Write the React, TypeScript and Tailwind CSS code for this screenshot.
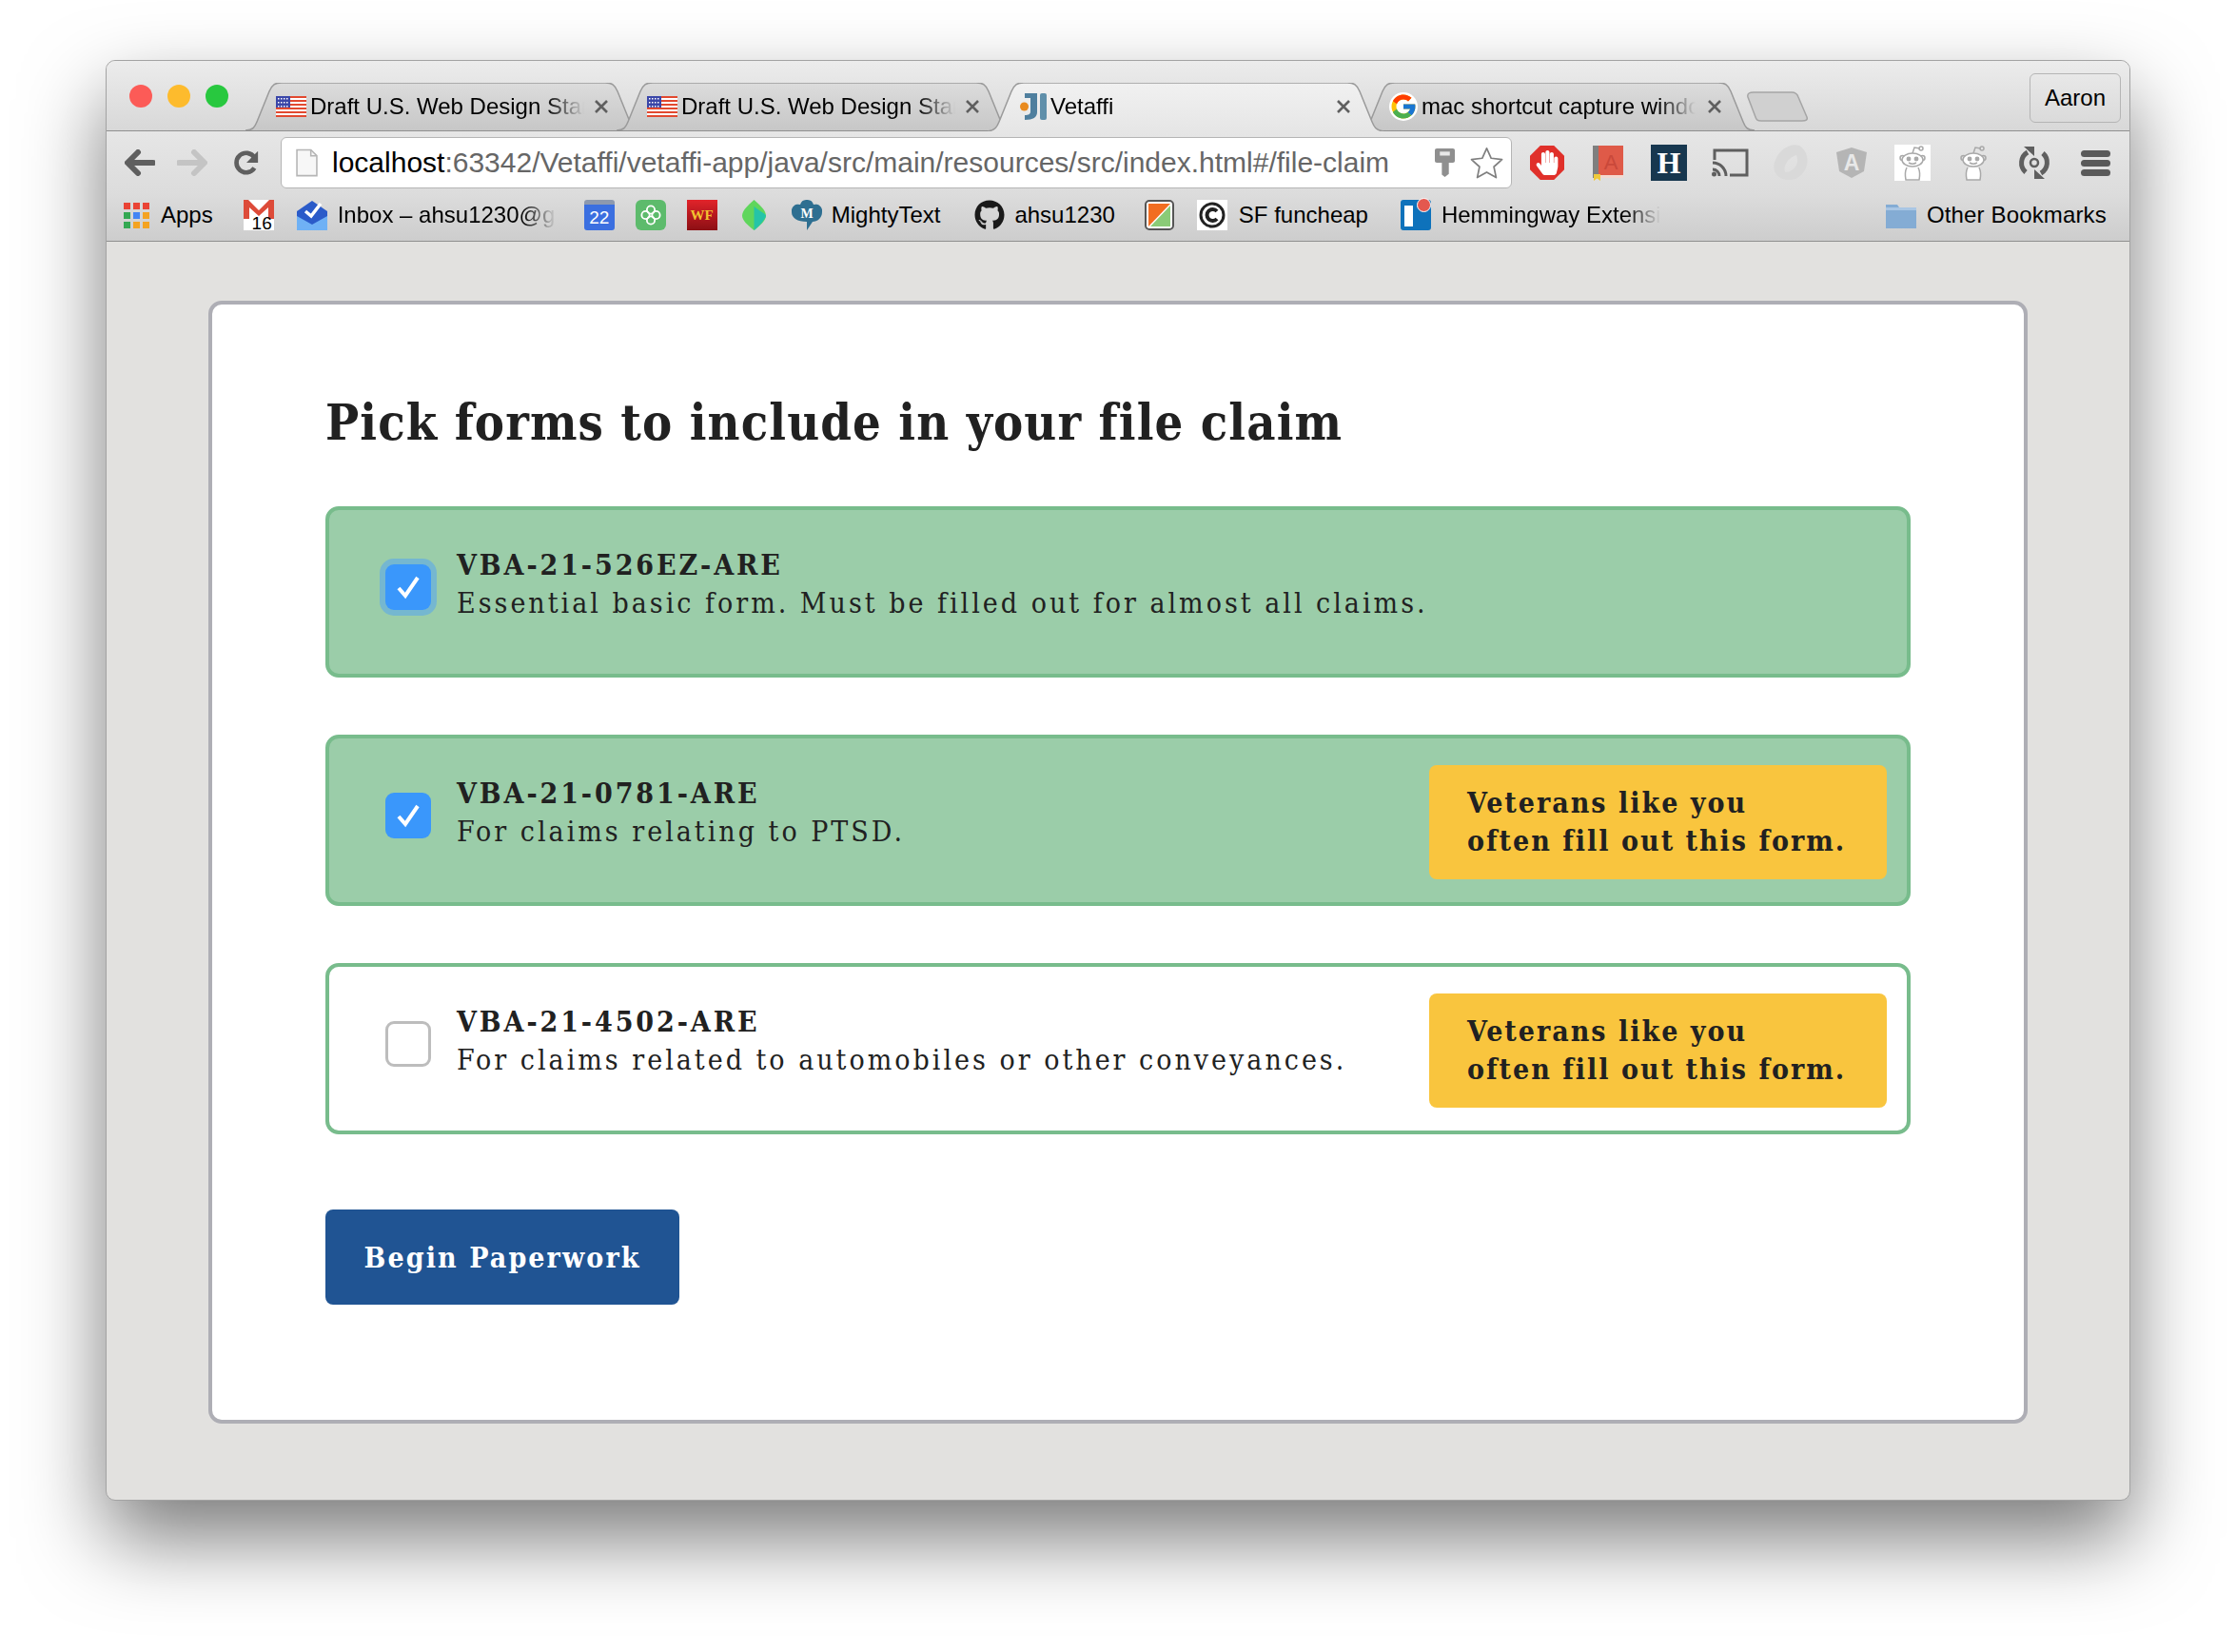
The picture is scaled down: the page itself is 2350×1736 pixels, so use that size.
import { FaGithub, FaHandPaper } from 'react-icons/fa';
import { FcGoogle } from 'react-icons/fc';

const serif = "font-['DejaVu_Serif_Condensed','DejaVu_Serif',serif]";
const chromeFont = "font-['Liberation_Sans',Arial,sans-serif]";

function Flag() {
    return (
        <svg width="32" height="22" viewBox="0 0 32 22" className="shrink-0">
            <rect width="32" height="22" fill="#fff" />
            {[0, 4, 8, 12, 16, 20].map(y => (
                <rect key={y} y={y} width="32" height="2" fill="#e2492f" />
            ))}
            <rect width="15" height="12" fill="#3a46a8" />
            {[2, 6, 10].map(y =>
                [2, 5, 8, 11].map(x => <rect key={`${x}-${y}`} x={x} y={y} width="1.5" height="1.5" fill="#fff" />)
            )}
        </svg>
    );
}

function IdeaIcon() {
    return (
        <svg width="28" height="28" viewBox="0 0 28 28" className="ml-[2px] shrink-0">
            <path d="M5 0h13v20c0 5-4 8-13 8v-5c4 0 6-1 6-4V5H5z" fill="#4f7f9e" />
            <rect x="21" y="0" width="7" height="28" rx="2" fill="#5f8faa" />
            <circle cx="4.5" cy="14" r="4.5" fill="#e98a1e" />
        </svg>
    );
}

function Tab({ title, active, icon, left }: { title: string; active?: boolean; icon: React.ReactNode; left?: boolean }) {
    return (
        <div className={`relative w-[416px] shrink-0 ${active ? 'z-10 h-[51px] -mb-px' : 'h-[50px]'} ${left ? '' : '-ml-[26px]'}`}>
            <svg width="416" height={active ? 51 : 50} viewBox={`0 0 416 ${active ? 51 : 50}`} className="absolute inset-0">
                <defs>
                    <linearGradient id={active ? 'tabOn' : 'tabOff'} x1="0" y1="0" x2="0" y2="1">
                        <stop offset="0" stopColor={active ? '#f1f1f1' : '#dcdcdc'} />
                        <stop offset="1" stopColor={active ? '#e6e6e6' : '#c7c7c7'} />
                    </linearGradient>
                </defs>
                <path
                    d={`M0 ${active ? 51 : 50}C8 50 10 46 12 41L25 9C28 2 31 0 38 0H378C385 0 388 2 391 9L404 41C406 46 408 50 416 ${active ? 51 : 50}`}
                    fill={`url(#${active ? 'tabOn' : 'tabOff'})`}
                    stroke="#9a9a9a"
                    strokeWidth="1.5"
                />
            </svg>
            <div className="relative flex h-[50px] items-center pl-[32px] text-[24px] text-black">
                {icon}
                <span className="ml-[4px] w-[288px] overflow-hidden whitespace-nowrap [mask-image:linear-gradient(to_right,#000_86%,transparent_100%)]">
                    {title}
                </span>
            </div>
            <svg width="16" height="16" viewBox="0 0 16 16" className="absolute right-[34px] top-[17px]">
                <path d="M2 2l12 12M14 2L2 14" stroke="#5f5f5f" strokeWidth="2.6" />
            </svg>
        </div>
    );
}

function ArrowIcon({ back, color }: { back?: boolean; color: string }) {
    return (
        <svg width="32" height="28" viewBox="0 0 32 28" className={back ? '' : '-scale-x-100'}>
            <path d="M14 3L3 14l11 11M4 14h26" fill="none" stroke={color} strokeWidth="6" strokeLinecap="round" strokeLinejoin="round" />
        </svg>
    );
}

function ReloadIcon() {
    return (
        <svg width="28" height="28" viewBox="0 0 30 30">
            <path d="M24 21a11 11 0 1 1 0-12" fill="none" stroke="#5f5f5f" strokeWidth="5" />
            <path d="M28 2v13H15z" fill="#5f5f5f" />
        </svg>
    );
}

function RedditIcon({ box }: { box?: boolean }) {
    return (
        <div className={`flex h-[38px] w-[38px] items-center justify-center ${box ? 'bg-white' : ''}`}>
            <svg width="28" height="38" viewBox="0 0 28 38" fill="none" stroke="#a9a9a9" strokeWidth="1.5">
                <path d="M14 9l2-6 6 1" />
                <circle cx="23" cy="4" r="2" />
                <circle cx="3.500" cy="14" r="2.500" />
                <circle cx="24.500" cy="14" r="2.500" />
                <ellipse cx="14" cy="16" rx="11" ry="7" fill="#fff" />
                <circle cx="10" cy="15" r="1.700" fill="#a9a9a9" />
                <circle cx="18" cy="15" r="1.700" fill="#a9a9a9" />
                <path d="M10 19c2.500 1.500 5.500 1.500 8 0" />
                <path d="M8 24c-2 4-2 8-1 13h14c1-5 1-9-1-13" fill="#fff" />
            </svg>
        </div>
    );
}

function ExtensionIcons() {
    return (
        <div className="ml-[5px] flex items-center">
            <div className="flex w-[64px] justify-center">
                <div className="flex h-[36px] w-[36px] items-center justify-center bg-[#e0302a] [clip-path:polygon(30%_0,70%_0,100%_30%,100%_70%,70%_100%,30%_100%,0_70%,0_30%)]">
                    <FaHandPaper className="text-[26px] text-white" />
                </div>
            </div>
            <div className="flex w-[64px] justify-center">
                <svg width="32" height="37" viewBox="0 0 32 37">
                    <rect width="32" height="34" fill="#df5a48" />
                    <rect width="6" height="34" fill="#7f7f7f" />
                    <rect x="6" y="31" width="26" height="3" fill="#f3d9d0" />
                    <path d="M1 30h7v7l-3.500-2.500L1 37z" fill="#f0c93a" />
                    <text x="19" y="25" fontSize="22" fill="#c9483a" textAnchor="middle" fontFamily="Liberation Sans">A</text>
                </svg>
            </div>
            <div className="flex w-[64px] justify-center">
                <div className="flex h-[38px] w-[38px] items-center justify-center bg-[#17374f] font-['Liberation_Serif',serif] text-[32px] font-bold leading-none text-white">
                    H
                </div>
            </div>
            <div className="flex w-[64px] justify-center">
                <svg width="39" height="30" viewBox="0 0 39 30" fill="none" stroke="#5f5f5f">
                    <path d="M3 12V2h34v26H19" strokeWidth="3" />
                    <path d="M1 15a14 14 0 0 1 14 14M1 22a7 7 0 0 1 7 7" strokeWidth="3" />
                    <circle cx="2.500" cy="27" r="2.500" fill="#5f5f5f" stroke="none" />
                </svg>
            </div>
            <div className="flex w-[64px] justify-center">
                <svg width="38" height="38" viewBox="0 0 38 38">
                    <path d="M28 1C40 8 40 28 24 36 8 40-3 30 3 16 7 6 18-2 28 1zM25 11C16 14 11 22 13 29c9 0 16-9 12-18z" fill="#d9d9d9" fillRule="evenodd" />
                </svg>
            </div>
            <div className="flex w-[64px] justify-center">
                <svg width="32" height="32" viewBox="0 0 32 32">
                    <path d="M16 0l16 5-3 20-13 7-13-7L0 5z" fill="#b5b5b5" />
                    <text x="16" y="24" fontSize="23" fill="#e8e8e8" textAnchor="middle" fontFamily="Liberation Sans" fontWeight="700">A</text>
                </svg>
            </div>
            <div className="flex w-[64px] justify-center">
                <RedditIcon box />
            </div>
            <div className="flex w-[64px] justify-center">
                <RedditIcon />
            </div>
            <div className="flex w-[64px] justify-center">
                <svg width="34" height="34" viewBox="0 0 34 34" fill="none">
                    <path d="M8 27a13 13 0 0 1 2-21M26 7a13 13 0 0 1-2 21" stroke="#5f5f5f" strokeWidth="5" />
                    <path d="M6 0h11v10zM28 34H17V24z" fill="#5f5f5f" />
                    <circle cx="17" cy="17" r="4" stroke="#5f5f5f" strokeWidth="2.500" />
                </svg>
            </div>
            <div className="flex w-[64px] flex-col items-center gap-[3px]">
                <div className="h-[7px] w-[31px] rounded-full bg-[#5a5a5a]" />
                <div className="h-[7px] w-[31px] rounded-full bg-[#5a5a5a]" />
                <div className="h-[7px] w-[31px] rounded-full bg-[#5a5a5a]" />
            </div>
        </div>
    );
}

function BookmarksBar() {
    const appColors = ['#ea4335', '#ea4335', '#ea4335', '#34a853', '#4285f4', '#f4a321', '#34a853', '#f4a321', '#f4a321'];
    return (
        <div className="flex h-[50px] items-center border-b border-[#8f8f8f] bg-gradient-to-b from-[#dcdcdc] to-[#cdcdcd] pb-[5px] text-[24px] text-black">
            <div className="ml-[18px] grid w-[27px] grid-cols-3 gap-[3px]">
                {appColors.map((c, i) => (
                    <div key={i} className="h-[7px] w-[7px]" style={{ background: c }} />
                ))}
            </div>
            <span className="ml-[12px]">Apps</span>

            <div className="relative ml-[32px] h-[32px] w-[32px] bg-white">
                <svg width="32" height="20" viewBox="0 0 32 20" className="absolute left-0 top-0">
                    <path d="M0 0h5l11 11L27 0h5v20h-6V8L16 17 6 8v12H0z" fill="#dd4b39" />
                </svg>
                <span className="absolute -bottom-[2px] right-[2px] text-[19px] leading-[19px]">16</span>
            </div>
            <svg width="32" height="32" viewBox="0 0 32 32" className="ml-[24px]">
                <path d="M0 12L16 1l16 11v20H0z" fill="#2b5bc9" />
                <path d="M9 12l6 5L25 4" fill="none" stroke="#fff" strokeWidth="3.500" />
                <path d="M0 17l16 9 16-9v15H0z" fill="#6fb1f5" />
            </svg>
            <span className="ml-[11px] w-[230px] overflow-hidden whitespace-nowrap [mask-image:linear-gradient(to_right,#000_84%,transparent_100%)]">
                Inbox – ahsu1230@gm
            </span>

            <div className="ml-[29px] flex h-[32px] w-[32px] items-center justify-center rounded-[3px] border-t-[5px] border-[#8d99ae] bg-[#3b6fe0] text-[19px] leading-none text-white">
                22
            </div>
            <div className="ml-[22px] flex h-[32px] w-[32px] items-center justify-center rounded-[6px] bg-[#5dbb6c]">
                <svg width="22" height="22" viewBox="0 0 24 24" fill="none" stroke="#fff" strokeWidth="2">
                    <circle cx="12" cy="6" r="4.500" />
                    <circle cx="6" cy="12" r="4.500" />
                    <circle cx="18" cy="12" r="4.500" />
                    <circle cx="12" cy="18" r="4.500" />
                </svg>
            </div>
            <div className="ml-[22px] flex h-[32px] w-[32px] items-center justify-center bg-gradient-to-b from-[#e2232a] to-[#8c0f14] font-['Liberation_Serif',serif] text-[15px] font-bold text-[#f2c230]">
                WF
            </div>
            <svg width="25" height="32" viewBox="0 0 26 48" preserveAspectRatio="none" className="ml-[26px]">
                <path d="M13 0c8 10 13 18 13 25S20 40 13 48C6 40 0 32 0 25S5 10 13 0z" fill="#5fd65c" />
                <path d="M13 10c6 8 13 12 13 15S20 40 13 48z" fill="#25c4a8" />
            </svg>
            <svg width="32" height="32" viewBox="0 0 32 32" className="ml-[27px]">
                <path d="M16 0a7 7 0 0 1 7 5 7 7 0 0 1 9 8c0 6-5 10-10 10l-6 9v-9C6 23 0 19 0 13a7 7 0 0 1 9-8 7 7 0 0 1 7-5z" fill="#2e6f91" />
                <text x="16" y="19" fontSize="14" fontWeight="700" fill="#fff" textAnchor="middle" fontFamily="Liberation Serif">M</text>
            </svg>
            <span className="ml-[10px]">MightyText</span>

            <FaGithub className="ml-[36px] text-[32px] text-[#1a1a1a]" />
            <span className="ml-[10px]">ahsu1230</span>

            <div className="ml-[31px] flex h-[32px] w-[31px] overflow-hidden rounded-[5px] border-2 border-[#555] bg-white p-[2px]">
                <svg width="23" height="24" viewBox="0 0 23 24">
                    <path d="M0 0h23L0 24z" fill="#f26d21" />
                    <path d="M23 2v22H2z" fill="#8acb77" />
                </svg>
            </div>
            <div className="ml-[24px] flex h-[32px] w-[32px] items-center justify-center bg-white">
                <svg width="30" height="30" viewBox="0 0 30 30" fill="none">
                    <circle cx="15" cy="15" r="12" stroke="#222" strokeWidth="3" />
                    <path d="M20 11a6 6 0 1 0 0 8" stroke="#222" strokeWidth="4" />
                </svg>
            </div>
            <span className="ml-[12px]">SF funcheap</span>

            <div className="relative ml-[34px] h-[32px] w-[32px] rounded-[3px] bg-[#0e72bb]">
                <div className="absolute left-[4px] top-[6px] h-[22px] w-[9px] bg-white" />
                <div className="absolute -top-[2px] right-0 h-[15px] w-[15px] rounded-full border border-white bg-[#e4584f]" />
            </div>
            <span className="ml-[11px] w-[230px] overflow-hidden whitespace-nowrap [mask-image:linear-gradient(to_right,#000_84%,transparent_100%)]">
                Hemmingway Extensi
            </span>

            <svg width="32" height="27" viewBox="0 0 32 27" className="ml-[237px]">
                <path d="M0 2h12l2 3h18v22H0z" fill="#84acd4" />
                <path d="M0 5h32v3H0z" fill="#a9c6e4" />
            </svg>
            <span className="ml-[11px] tracking-[0.15px]">Other Bookmarks</span>
        </div>
    );
}

function FormRow({ code, text, checked, focused, hint }: { code: string; text: string; checked?: boolean; focused?: boolean; hint?: boolean }) {
    return (
        <div className={`flex h-[180px] rounded-[14px] border-[4px] border-[#78bc8c] pl-[59px] ${checked ? 'bg-[#9bcda9]' : 'bg-white'}`}>
            <div
                className={`mt-[57px] flex h-[48px] w-[48px] shrink-0 items-center justify-center rounded-[9px] ${
                    checked ? 'bg-[#3a97fb]' : 'border-[3px] border-[#bdbdbd] bg-white'
                } ${focused ? 'ring-[6px] ring-[#75b7d0]' : ''}`}
            >
                {checked && (
                    <svg width="30" height="28" viewBox="0 0 30 28">
                        <path d="M5 15l7 8L25 4" fill="none" stroke="#fff" strokeWidth="4" />
                    </svg>
                )}
            </div>
            <div className="ml-[27px] mt-[38px] whitespace-nowrap text-[#212121]">
                <div className="text-[30px] font-bold leading-[40px] tracking-[2.9px]">{code}</div>
                <div className="text-[30px] leading-[40px] tracking-[3px]">{text}</div>
            </div>
            {hint && (
                <div className="ml-auto mr-[21px] mt-[28px] h-[120px] w-[481px] rounded-[8px] bg-[#f9c53e] pl-[40px] pt-[20px] text-[30px] font-bold leading-[40px] tracking-[2px] text-[#212121]">
                    Veterans like you
                    <br />
                    often fill out this form.
                </div>
            )}
        </div>
    );
}

export default function App() {
    return (
        <div className="h-[1736px] w-[2350px] overflow-hidden bg-white pl-[111px] pt-[63px]">
            <div className={`w-[2128px] overflow-hidden rounded-[10px] border border-[#a3a3a3] bg-[#e2e1df] shadow-[0_40px_85px_rgba(0,0,0,0.52)] ${chromeFont}`}>
                {/* Tab strip */}
                <div className="flex h-[74px] items-end border-b border-[#8f8f8f] bg-gradient-to-b from-[#ececec] to-[#d8d8d8]">
                    <div className="mb-[24px] ml-[24px] mr-[18px] flex gap-[16px]">
                        <div className="h-[24px] w-[24px] rounded-full bg-[#fc5b57]" />
                        <div className="h-[24px] w-[24px] rounded-full bg-[#fdbb2d]" />
                        <div className="h-[24px] w-[24px] rounded-full bg-[#28c83f]" />
                    </div>
                    <Tab left title="Draft U.S. Web Design Stan" icon={<Flag />} />
                    <Tab title="Draft U.S. Web Design Stan" icon={<Flag />} />
                    <Tab active title="Vetaffi" icon={<IdeaIcon />} />
                    <Tab title="mac shortcut capture windo" icon={<FcGoogle className="shrink-0 rounded-full bg-white text-[30px]" />} />
                    <svg width="64" height="32" viewBox="0 0 64 32" className="-ml-[8px] mb-[9px]">
                        <path d="M1 6C0 2 3 1 7 1h40c4 0 6 2 7 5l9 21c1 3-1 4-5 4H15c-4 0-5-1-6-4z" fill="#d0d0d0" stroke="#a5a5a5" strokeWidth="1.5" />
                    </svg>
                    <div className="mb-[8px] ml-auto mr-[9px] flex h-[52px] w-[96px] items-center justify-center rounded-[6px] border border-[#b5b5b5] text-[24px] text-black">
                        Aaron
                    </div>
                </div>

                {/* Toolbar */}
                <div className="relative z-0 flex h-[66px] items-center bg-gradient-to-b from-[#e6e6e6] to-[#dcdcdc] pl-[19px]">
                    <ArrowIcon back color="#5f5f5f" />
                    <div className="ml-[23px] flex">
                        <ArrowIcon color="#c4c4c4" />
                    </div>
                    <div className="ml-[27px] flex">
                        <ReloadIcon />
                    </div>
                    <div className="ml-[22px] flex h-[54px] w-[1294px] items-center rounded-[6px] border border-[#b5b5b5] bg-white pl-[15px]">
                        <svg width="23" height="30" viewBox="0 0 22 28">
                            <path d="M1 1h14l6 6v20H1z" fill="#f7f7f7" stroke="#b5b5b5" strokeWidth="1.500" />
                            <path d="M15 1v6h6" fill="none" stroke="#b5b5b5" strokeWidth="1.500" />
                        </svg>
                        <span className="ml-[15px] text-[30px] leading-none text-[#666]">
                            <span className="text-black">localhost</span>:63342/Vetaffi/vetaffi-app/java/src/main/resources/src/index.html#/file-claim
                        </span>
                        <svg width="21" height="30" viewBox="0 0 20 36" preserveAspectRatio="none" className="ml-auto">
                            <path d="M0 2q0-2 2-2h16q2 0 2 2v14q0 2-2 2h-4v14l-4 4-3-3V18H2q-2 0-2-2z" fill="#8f8f8f" />
                            <rect x="5" y="4" width="10" height="5" fill="#e8e8e8" />
                        </svg>
                        <svg width="35" height="34" viewBox="0 0 36 36" className="ml-[16px] mr-[8px]">
                            <path d="M18 2l5 11 12 1.500-9 8 2.500 12L18 28.500 7.500 34.500 10 22.500l-9-8L13 13z" fill="#fff" stroke="#7f7f7f" strokeWidth="1.800" strokeLinejoin="round" />
                        </svg>
                    </div>
                    <ExtensionIcons />
                </div>

                <BookmarksBar />

                {/* Page */}
                <div className={`mx-[107px] mb-[80px] mt-[62px] rounded-[14px] border-[4px] border-[#aeaeb5] bg-white px-[119px] pb-[121px] pt-[91px] ${serif}`}>
                    <h1 className="h-[121px] whitespace-nowrap text-[52px] font-bold leading-[66px] tracking-[1.1px] text-[#212121]">
                        Pick forms to include in your file claim
                    </h1>
                    <div className="flex flex-col gap-[60px]">
                        <FormRow checked focused code="VBA-21-526EZ-ARE" text="Essential basic form. Must be filled out for almost all claims." />
                        <FormRow checked hint code="VBA-21-0781-ARE" text="For claims relating to PTSD." />
                        <FormRow hint code="VBA-21-4502-ARE" text="For claims related to automobiles or other conveyances." />
                    </div>
                    <button className="mt-[79px] block h-[100px] w-[372px] rounded-[8px] bg-[#205493] text-[30px] font-bold tracking-[2.1px] text-white">
                        Begin Paperwork
                    </button>
                </div>
            </div>
        </div>
    );
}
